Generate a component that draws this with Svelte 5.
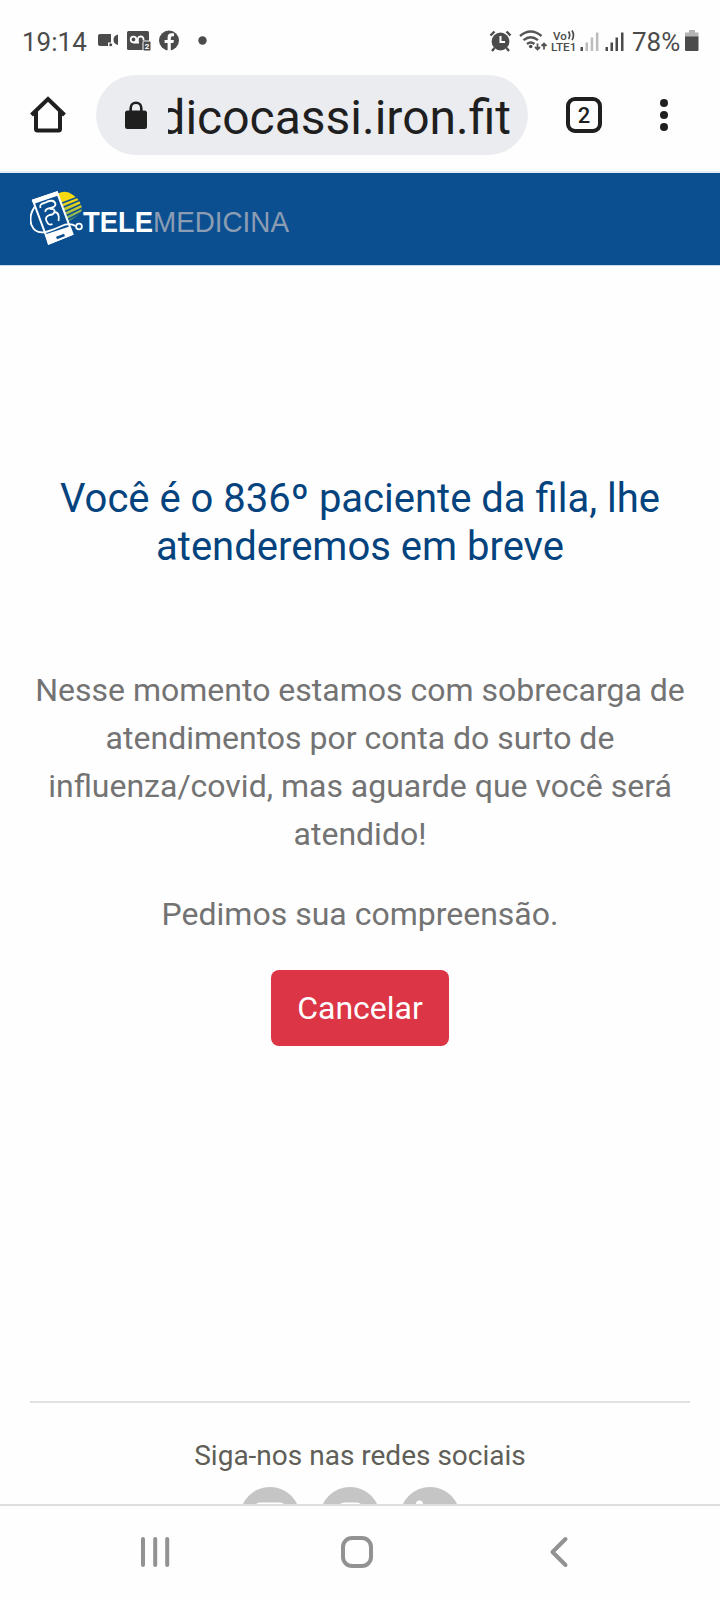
<script lang="ts">
	const message =
		'Nesse momento estamos com sobrecarga de atendimentos por conta do surto de influenza/covid, mas aguarde que você será atendido!';

	let position = $state(836);
	let tabs = $state(2);
</script>

<div class="phone">
	<div class="status">
		<span class="time">19:14</span>
		<svg class="notifications" width="116" height="28" viewBox="0 0 116 28">
			<!-- video call -->
			<path d="M4 6h11v8.500h-3v3.500H4a2 2 0 0 1-2-2V8a2 2 0 0 1 2-2z" />
			<circle cx="14.700" cy="16.800" r="1.500" />
			<path d="M22 6.500v10.500q-4.500-1-4.500-5.300t4.500-5.200z" />
			<!-- voicemail -->
			<rect x="31" y="3" width="22" height="19" rx="1.500" />
			<g fill="none" stroke="#fff" stroke-width="1.800">
				<circle cx="37.500" cy="11.500" r="2.800" />
				<path d="M37.500 14.500h4.500q-1-6 2.500-6t3 4" />
			</g>
			<rect x="47" y="13" width="8" height="10" rx="1.500" stroke="#fff" />
			<text class="badge" x="51" y="20.800">2</text>
			<!-- facebook -->
			<circle cx="73" cy="12.500" r="10" />
			<path d="M71.600 23v-8h-3v-3h3v-2.500q0-4.200 4-4.200h2.400v3h-1.700q-1.500 0-1.500 1.600v2.100h3.100l-.5 3h-2.600v8z" fill="#fff" />
			<circle cx="106.500" cy="12.500" r="4.200" />
		</svg>
		<svg class="signals" width="140" height="28" viewBox="0 0 140 28">
			<!-- alarm -->
			<circle cx="12.500" cy="13.500" r="8.900" />
			<path
				d="M2.500 7.500l4-4M22.500 7.500l-4-4M6.500 20l-2.500 3M18.500 20l2.500 3"
				fill="none"
				stroke="#4b4b4b"
				stroke-width="2.400"
			/>
			<path d="M12.500 8v6h4.500" fill="none" stroke="#fff" stroke-width="2" />
			<!-- wifi -->
			<g fill="none" stroke="#555" stroke-width="2.300">
				<path d="M32 8q10.700-9 21.500 0M35.500 12.200q7.200-6 14.500 0M39 16q3.700-3 7.500 0" />
			</g>
			<circle cx="42.700" cy="18.500" r="1.800" />
			<path d="M49.500 15.500v6M47 19l2.500 2.500 2.500-2.500M56 21.500v-6M53.500 18l2.500-2.500 2.500 2.500" fill="none" stroke="#555" stroke-width="1.800" />
			<text class="volte" x="65" y="11.500">Vo</text>
			<path d="M80.500 3.500q2.500 3.800 0 7.600M84 2.500q3 4.800 0 9.600" fill="none" stroke="#4b4b4b" stroke-width="1.700" />
			<text class="volte" x="63" y="23" textLength="25.500" lengthAdjust="spacingAndGlyphs">LTE1</text>
			<!-- sim 1 and sim 2 -->
			<path d="M92.500 19H95v4h-2.500zM117.500 19h2.500v4h-2.500zM122.500 14.500h2.500V23h-2.500zM127.500 9.500h2.500V23h-2.500zM133 4.500h2.500V23H133z" />
			<path d="M97.500 14.500h2.500V23h-2.500zM102.700 9.500h2.500V23h-2.500zM107.900 4.500h2.500V23h-2.500z" fill="#bcbcbc" />
		</svg>
		<span class="battery-level">78%</span>
		<svg class="battery" width="16" height="24" viewBox="0 0 16 24">
			<path d="M5 1h6v2.500h3.500v5H1V3.500h4z" fill="#b4b4b4" />
			<path d="M1 7.500h13.500V21q0 1-1 1H2q-1 0-1-1z" />
		</svg>
	</div>

	<div class="toolbar">
		<svg class="home" width="36" height="38" viewBox="0 0 36 38">
			<path
				d="M1.500 19L18 3l16.500 16M6 15v18q0 1.500 1.500 1.500h21q1.500 0 1.500-1.500V15"
				fill="none"
				stroke="#1f1f1f"
				stroke-width="4"
			/>
		</svg>
		<div class="address">
			<svg width="22" height="28" viewBox="0 0 22 28">
				<rect x="0" y="9.500" width="22" height="18.500" rx="2.500" />
				<path d="M5.700 11V7a5.300 5.300 0 0 1 10.600 0v4" fill="none" stroke="#1f1f1f" stroke-width="2.600" />
			</svg>
			<div class="url"><span>dicocassi.iron.fit</span></div>
		</div>
		<div class="tabs">{tabs}</div>
		<div class="menu"><i></i><i></i><i></i></div>
	</div>

	<header>
		<svg class="logo" width="54" height="56" viewBox="0 0 54 56">
			<defs>
				<linearGradient id="sun" x1="0" y1="0" x2="0" y2="1">
					<stop offset="0.300" stop-color="#f5d911" />
					<stop offset="1" stop-color="#5ea779" />
				</linearGradient>
			</defs>
			<path d="M28 3.500q8-4 15 1.500 8 5 9 14-1 4-4 6l-10 7z" fill="url(#sun)" />
			<path d="M31 13.500l17-6.500M32.500 17.500l18-7.500M34 22l18.500-8.500M35.500 26l18-8.500M37 30l16-8.500" stroke="#0b4f91" stroke-width="1.500" />
			<path d="M3 10.500L27 2.300l15.500 41.700-23.500 9.500z" fill="#0b4f91" stroke="#fff" stroke-width="2" />
			<path d="M2 9.800L27.500 1.300l1.500 4L3.500 14z" fill="#fff" />
			<path d="M15 44.500l24.500-8 4 8.200-25.500 10.300z" fill="#fff" />
			<path d="M26.500 48l8-3" stroke="#0b4f91" stroke-width="2.500" />
			<path
				d="M4.500 17Q-1.500 26 1.500 35q4 10 16 6.500 8-2.500 13-5 9-4.500 15-.5"
				fill="none"
				stroke="#fff"
				stroke-width="1.900"
			/>
			<path
				d="M10.500 18q-1.500-4 4-5 9-5 11 1 0 3-5 4-6 1-5 4M20 19q5-1 4.500 3-1 3-5 3-5 2-3 6 2 5 6 3M25 22q5 1 3.500 9"
				fill="none"
				stroke="#fff"
				stroke-width="1.800"
			/>
			<circle cx="49" cy="36.500" r="2.900" fill="#0b4f91" stroke="#fff" stroke-width="1.800" />
		</svg>
		<svg class="brand" width="212" height="40" viewBox="0 0 212 40">
			<text class="tele" x="1" y="30" textLength="70" lengthAdjust="spacingAndGlyphs">TELE</text>
			<text class="medicina" x="71" y="30" textLength="136" lengthAdjust="spacingAndGlyphs">MEDICINA</text>
		</svg>
	</header>

	<main>
		<h1>Você é o {position}º paciente da fila, lhe atenderemos em breve</h1>
		<p>{message}</p>
		<p>Pedimos sua compreensão.</p>
		<button type="button">Cancelar</button>
	</main>

	<footer>
		<p>Siga-nos nas redes sociais</p>
		<div class="social">
			<svg width="60" height="60" viewBox="0 0 60 60">
				<circle cx="30" cy="30" r="30" />
				<rect x="15.500" y="15.500" width="29" height="29" rx="4" fill="#fff" />
			</svg>
			<svg width="60" height="60" viewBox="0 0 60 60">
				<circle cx="30" cy="30" r="30" />
				<rect x="18" y="15.500" width="25" height="29" rx="6" fill="#fff" />
			</svg>
			<svg width="60" height="60" viewBox="0 0 60 60">
				<circle cx="30" cy="30" r="30" />
				<circle cx="19.500" cy="17" r="3.500" fill="#fff" />
				<path d="M16.500 23h6v20h-6z" fill="#fff" />
			</svg>
		</div>
	</footer>

	<nav>
		<svg width="30" height="32" viewBox="0 0 30 32">
			<path d="M3 3v26M15.200 3v26M27.200 3v26" />
		</svg>
		<svg class="home-key" width="34" height="34" viewBox="0 0 34 34">
			<rect x="3" y="3" width="28" height="28" rx="9" />
		</svg>
		<svg width="20" height="32" viewBox="0 0 20 32">
			<path d="M16.500 3L3.500 16l13 13" />
		</svg>
	</nav>
</div>

<style>
	:global(body) {
		background: #fefefe;
	}

	.phone {
		display: flex;
		flex-direction: column;
		width: 720px;
		height: 1600px;
		overflow: hidden;
		font-family: Roboto, 'Liberation Sans', sans-serif;
		background: #fefefe;
	}

	svg {
		display: block;
		flex: none;
	}

	.status {
		display: flex;
		align-items: flex-start;
		height: 44px;
		padding: 28px 20px 0 22px;
		color: #4b4b4b;
		fill: #4b4b4b;
		font-size: 26px;
		line-height: 28px;
	}

	.time {
		width: 74px;
	}

	.signals {
		margin: 0 4px 0 auto;
	}

	.battery-level {
		width: 52px;
	}

	.battery {
		margin-top: 1px;
	}

	.badge {
		font-size: 8px;
		font-weight: bold;
		text-anchor: middle;
		fill: #fff;
	}

	.volte {
		font-size: 11.500px;
		font-weight: 500;
	}

	.toolbar {
		display: flex;
		align-items: center;
		height: 86px;
		padding: 0 52px 13px 30px;
		border-bottom: 2px solid #e3edf5;
	}

	.address {
		display: flex;
		align-items: center;
		gap: 21px;
		width: 432px;
		height: 80px;
		box-sizing: border-box;
		padding: 0 17px 0 29px;
		margin-left: 30px;
		border-radius: 40px;
		background: #ebecf0;
		fill: #1f1f1f;
	}

	.url {
		display: flex;
		justify-content: flex-end;
		flex: 1;
		padding-top: 6px;
		overflow: hidden;
		color: #1f1f1f;
		font-size: 48px;
		line-height: 60px;
		white-space: nowrap;
	}

	.tabs {
		width: 36px;
		height: 36px;
		box-sizing: border-box;
		margin-left: 38px;
		border: 4px solid #1f1f1f;
		border-radius: 9px;
		color: #1f1f1f;
		font-size: 22px;
		font-weight: 500;
		line-height: 29px;
		text-align: center;
	}

	.menu {
		display: flex;
		flex-direction: column;
		gap: 4px;
		margin-left: 58px;
	}

	.menu i {
		width: 8px;
		height: 8px;
		border-radius: 50%;
		background: #1f1f1f;
	}

	header {
		display: flex;
		align-items: flex-start;
		height: 93px;
		box-sizing: border-box;
		padding: 17px 0 0 30px;
		background: #0b4f91;
		border-bottom: 1px solid #c9dbea;
	}

	.brand {
		margin: 12px 0 0 -2px;
		font-family: 'Liberation Sans', Arial, sans-serif;
		font-size: 29px;
	}

	.tele {
		fill: #fff;
		font-weight: bold;
	}

	.medicina {
		fill: #8c9db3;
	}

	main {
		display: flex;
		flex-direction: column;
		align-items: center;
		padding: 209px 30px 0;
		text-align: center;
	}

	h1 {
		margin: 0 0 95px;
		color: #04437d;
		font-size: 40px;
		font-weight: normal;
		line-height: 48px;
	}

	main p {
		margin: 0 0 32px;
		color: #737373;
		font-size: 32px;
		line-height: 48px;
	}

	button {
		height: 76px;
		padding: 0 26px;
		border: 0;
		border-radius: 8px;
		background: #dc3545;
		color: #fff;
		font-family: inherit;
		font-size: 32px;
	}

	footer {
		flex: 1;
		min-height: 0;
		margin: 355px 30px 0;
		overflow: hidden;
		border-top: 2px solid #e2e2e2;
	}

	footer p {
		margin: 33px 0 11px;
		color: #5f5f58;
		font-size: 28px;
		line-height: 40px;
		text-align: center;
	}

	.social {
		display: flex;
		justify-content: center;
		gap: 20px;
		margin-right: 20px;
		fill: #c5c5c5;
	}

	nav {
		display: flex;
		align-items: center;
		flex: none;
		height: 96px;
		box-sizing: border-box;
		padding: 0 0 2px 140px;
		border-top: 2px solid #dedede;
		fill: none;
		stroke: #929292;
		stroke-width: 4;
		stroke-linecap: round;
		stroke-linejoin: round;
	}

	.home-key {
		margin: 0 175px 0 170px;
	}
</style>
